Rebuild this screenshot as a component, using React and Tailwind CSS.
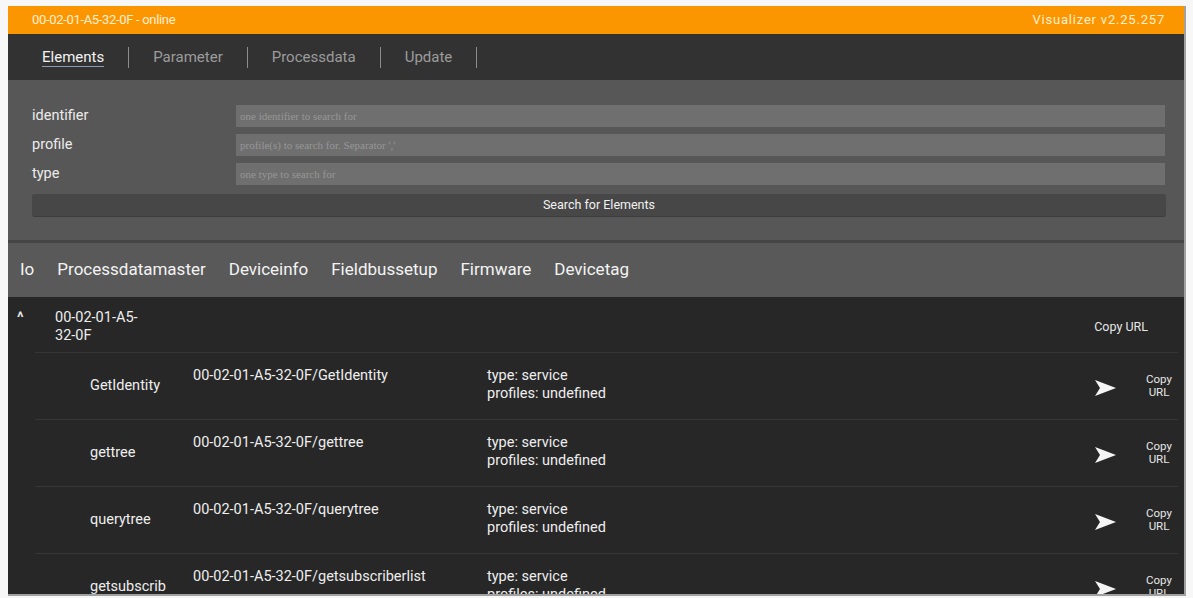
import React from 'react';

const navTabs = ['Elements', 'Parameter', 'Processdata', 'Update'];
const groupTabs = ['Io', 'Processdatamaster', 'Deviceinfo', 'Fieldbussetup', 'Firmware', 'Devicetag'];

const searchFields = [
  { label: 'identifier', placeholder: 'one identifier to search for' },
  { label: 'profile', placeholder: "profile(s) to search for. Separator ','" },
  { label: 'type', placeholder: 'one type to search for' },
];

const services = [
  { name: 'GetIdentity', path: '00-02-01-A5-32-0F/GetIdentity' },
  { name: 'gettree', path: '00-02-01-A5-32-0F/gettree' },
  { name: 'querytree', path: '00-02-01-A5-32-0F/querytree' },
  { name: 'getsubscrib', path: '00-02-01-A5-32-0F/getsubscriberlist' },
];

const SendArrow = () => (
  <svg width="21" height="16" viewBox="0 0 21 16">
    <polygon points="0,0 21,8 0,16 5,8" fill="#f5f5f5" />
  </svg>
);

const ServiceRow = ({ item }) => (
  <div className="flex h-[67px] ml-[27px] mr-[6px] border-t border-[#363636] pl-[55px]">
    <div className="w-[103px] self-center text-[14.5px] text-[#eeeeee] whitespace-nowrap">{item.name}</div>
    <div className="w-[294px] pt-[14px] text-[14.5px] leading-[18px] text-[#eeeeee]">{item.path}</div>
    <div className="flex-1 pt-[14px] text-[14.5px] leading-[18px] text-[#eeeeee]">
      <div>type: service</div>
      <div>profiles: undefined</div>
    </div>
    <div className="self-center mr-[24px] mt-[4px]">
      <SendArrow />
    </div>
    <div className="w-[38px] self-center text-center text-[11.5px] leading-[13px] text-[#e6e6e6]">
      Copy
      <br />
      URL
    </div>
  </div>
);

const App = () => {
  return (
    <div className="w-[1193px] h-[598px] bg-[#f7f7f7] overflow-hidden" style={{ fontFamily: 'Roboto, "Liberation Sans", sans-serif' }}>
      <div className="ml-[8px] mt-[6px] w-[1178px] h-[590px] flex flex-col overflow-hidden border-r-2 border-b-2 border-[#a0a0a0]">
        {/* status bar */}
        <div className="h-[28px] shrink-0 bg-[#fb9600] flex items-center justify-between pl-[24px] pr-[19px] text-[13px] text-[#ffefd2]">
          <span className="tracking-tight">00-02-01-A5-32-0F - online</span>
          <span className="tracking-[0.8px]">Visualizer v2.25.257</span>
        </div>

        {/* main navigation */}
        <div className="h-[46px] shrink-0 bg-[#323232] flex items-center pl-[34px] gap-[24px] text-[15px]">
          {navTabs.map((tab, i) => (
            <React.Fragment key={tab}>
              <span className={i === 0 ? 'text-[#f2f2f2] border-b border-[#8a9bb8] leading-[18px]' : 'text-[#9c9c9c]'}>{tab}</span>
              <span className="w-px h-[21px] bg-[#8c8c8c]" />
            </React.Fragment>
          ))}
        </div>

        {/* search */}
        <div className="h-[160px] shrink-0 bg-[#575757] pl-[24px] pr-[10px] pt-[25px]">
          <div className="flex flex-col gap-[7px] pr-[9px]">
            {searchFields.map((f) => (
              <div key={f.label} className="flex items-center h-[22px]">
                <div className="w-[204px] text-[14.5px] text-[#ececec]">{f.label}</div>
                <div className="flex-1 h-[22px] bg-[#6f6f6f] flex items-center pl-[4px] text-[11px] text-[#979797]" style={{ fontFamily: '"Liberation Serif", serif' }}>
                  {f.placeholder}
                </div>
              </div>
            ))}
          </div>
          <div className="mt-[9px] mr-[8px] h-[23px] bg-[#474747] rounded-[3px] flex items-center justify-center text-[12.5px] text-[#f2f2f2] border-b border-[#3e3e3e]">
            Search for Elements
          </div>
        </div>
        <div className="h-[3px] shrink-0 bg-[#454545]" />

        {/* group tabs */}
        <div className="h-[54px] shrink-0 bg-[#595959] flex items-center pl-[12px] gap-[23px] text-[17px] text-[#f3f3f3]">
          {groupTabs.map((t) => (
            <span key={t}>{t}</span>
          ))}
        </div>

        {/* element tree */}
        <div className="flex-1 bg-[#272727] overflow-hidden">
          <div className="flex h-[55px] pl-[9px] pr-[36px]">
            <div className="w-[38px] pt-[9px] text-[15px] font-bold text-[#e8e8e8]">^</div>
            <div className="w-[90px] pt-[12px] text-[14.5px] leading-[18px] text-[#eeeeee]">
              00-02-01-A5-
              <br />
              32-0F
            </div>
            <div className="flex-1" />
            <div className="self-center mt-[5px] text-[12.5px] text-[#e6e6e6]">Copy URL</div>
          </div>
          {services.map((s) => (
            <ServiceRow key={s.name} item={s} />
          ))}
        </div>
      </div>
    </div>
  );
};

export default App;
